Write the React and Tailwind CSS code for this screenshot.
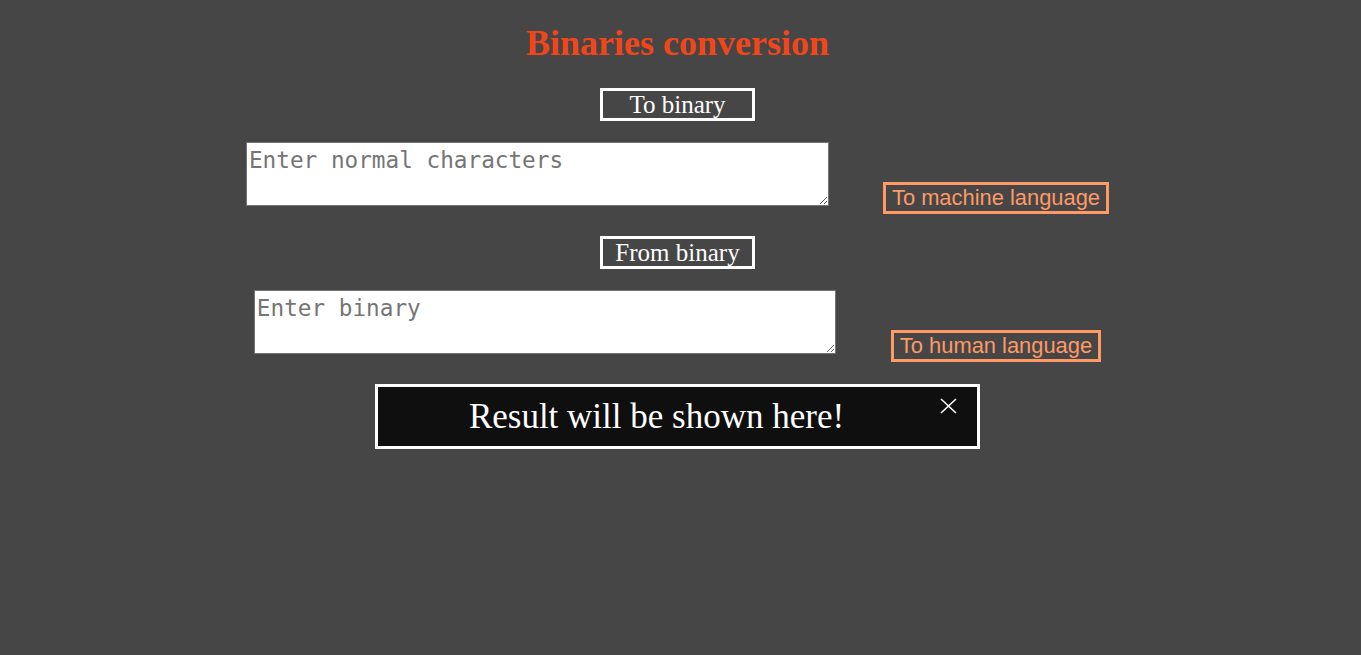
import React from 'react';

// Обёртка для заголовков секций ("To binary" / "From binary")
const SectionLabel = ({ children }) => (
    <div className="w-[155px] h-[33px] border-[3px] border-white text-center text-white text-[25px] leading-[27px] font-['Liberation_Serif',serif]">
        {children}
    </div>
);

// Поле ввода + кнопка справа
const ConvertRow = ({ placeholder, label, width, gap }) => (
    <div className={`flex items-start ${gap}`}>
        <textarea
            placeholder={placeholder}
            className={`${width} h-[64px] bg-white border border-[#767676] px-[2px] pt-[0px] pb-[2px] text-[22.7px] text-black placeholder:text-[#757575] font-['DejaVu_Sans_Mono',monospace] outline-none`}
        />
        <button className="mt-[40px] h-[32px] border-[3px] border-[#ff9966] px-[6px] text-[21.9px] leading-[24px] text-[#ff9966] font-['Liberation_Sans',Arial,sans-serif] whitespace-nowrap">
            {label}
        </button>
    </div>
);

export default function App() {
    return (
        <div className="min-h-screen w-full bg-[#464646]">
            <div className="w-[1355px] flex flex-col items-center">
                <h1 className="mt-[23px] text-[36px] leading-[41px] font-bold text-[#f0461a] font-['Liberation_Serif',serif]">
                    Binaries conversion
                </h1>

                <div className="mt-[24px]">
                    <SectionLabel>To binary</SectionLabel>
                </div>

                <div className="mt-[21px]">
                    <ConvertRow
                        placeholder="Enter normal characters"
                        label="To machine language"
                        width="w-[583px]"
                        gap="gap-[54px]"
                    />
                </div>

                <div className="mt-[22px]">
                    <SectionLabel>From binary</SectionLabel>
                </div>

                <div className="mt-[21px]">
                    <ConvertRow
                        placeholder="Enter binary"
                        label="To human language"
                        width="w-[582px]"
                        gap="gap-[55px]"
                    />
                </div>

                {/* Блок результата */}
                <div className="relative mt-[22px] w-[605px] h-[65px] border-[3px] border-white bg-[#0f0f0f] flex items-center justify-center pr-[42px]">
                    <span className="text-white text-[35px] leading-[40px] font-['Liberation_Serif',serif]">
                        Result will be shown here!
                    </span>
                    <svg
                        className="absolute right-[20px] top-[11px]"
                        width="17"
                        height="16"
                        viewBox="0 0 17 16"
                        fill="none"
                        stroke="white"
                        strokeWidth="1.6"
                    >
                        <path d="M1 1 L16 15 M16 1 L1 15" />
                    </svg>
                </div>
            </div>
        </div>
    );
}
